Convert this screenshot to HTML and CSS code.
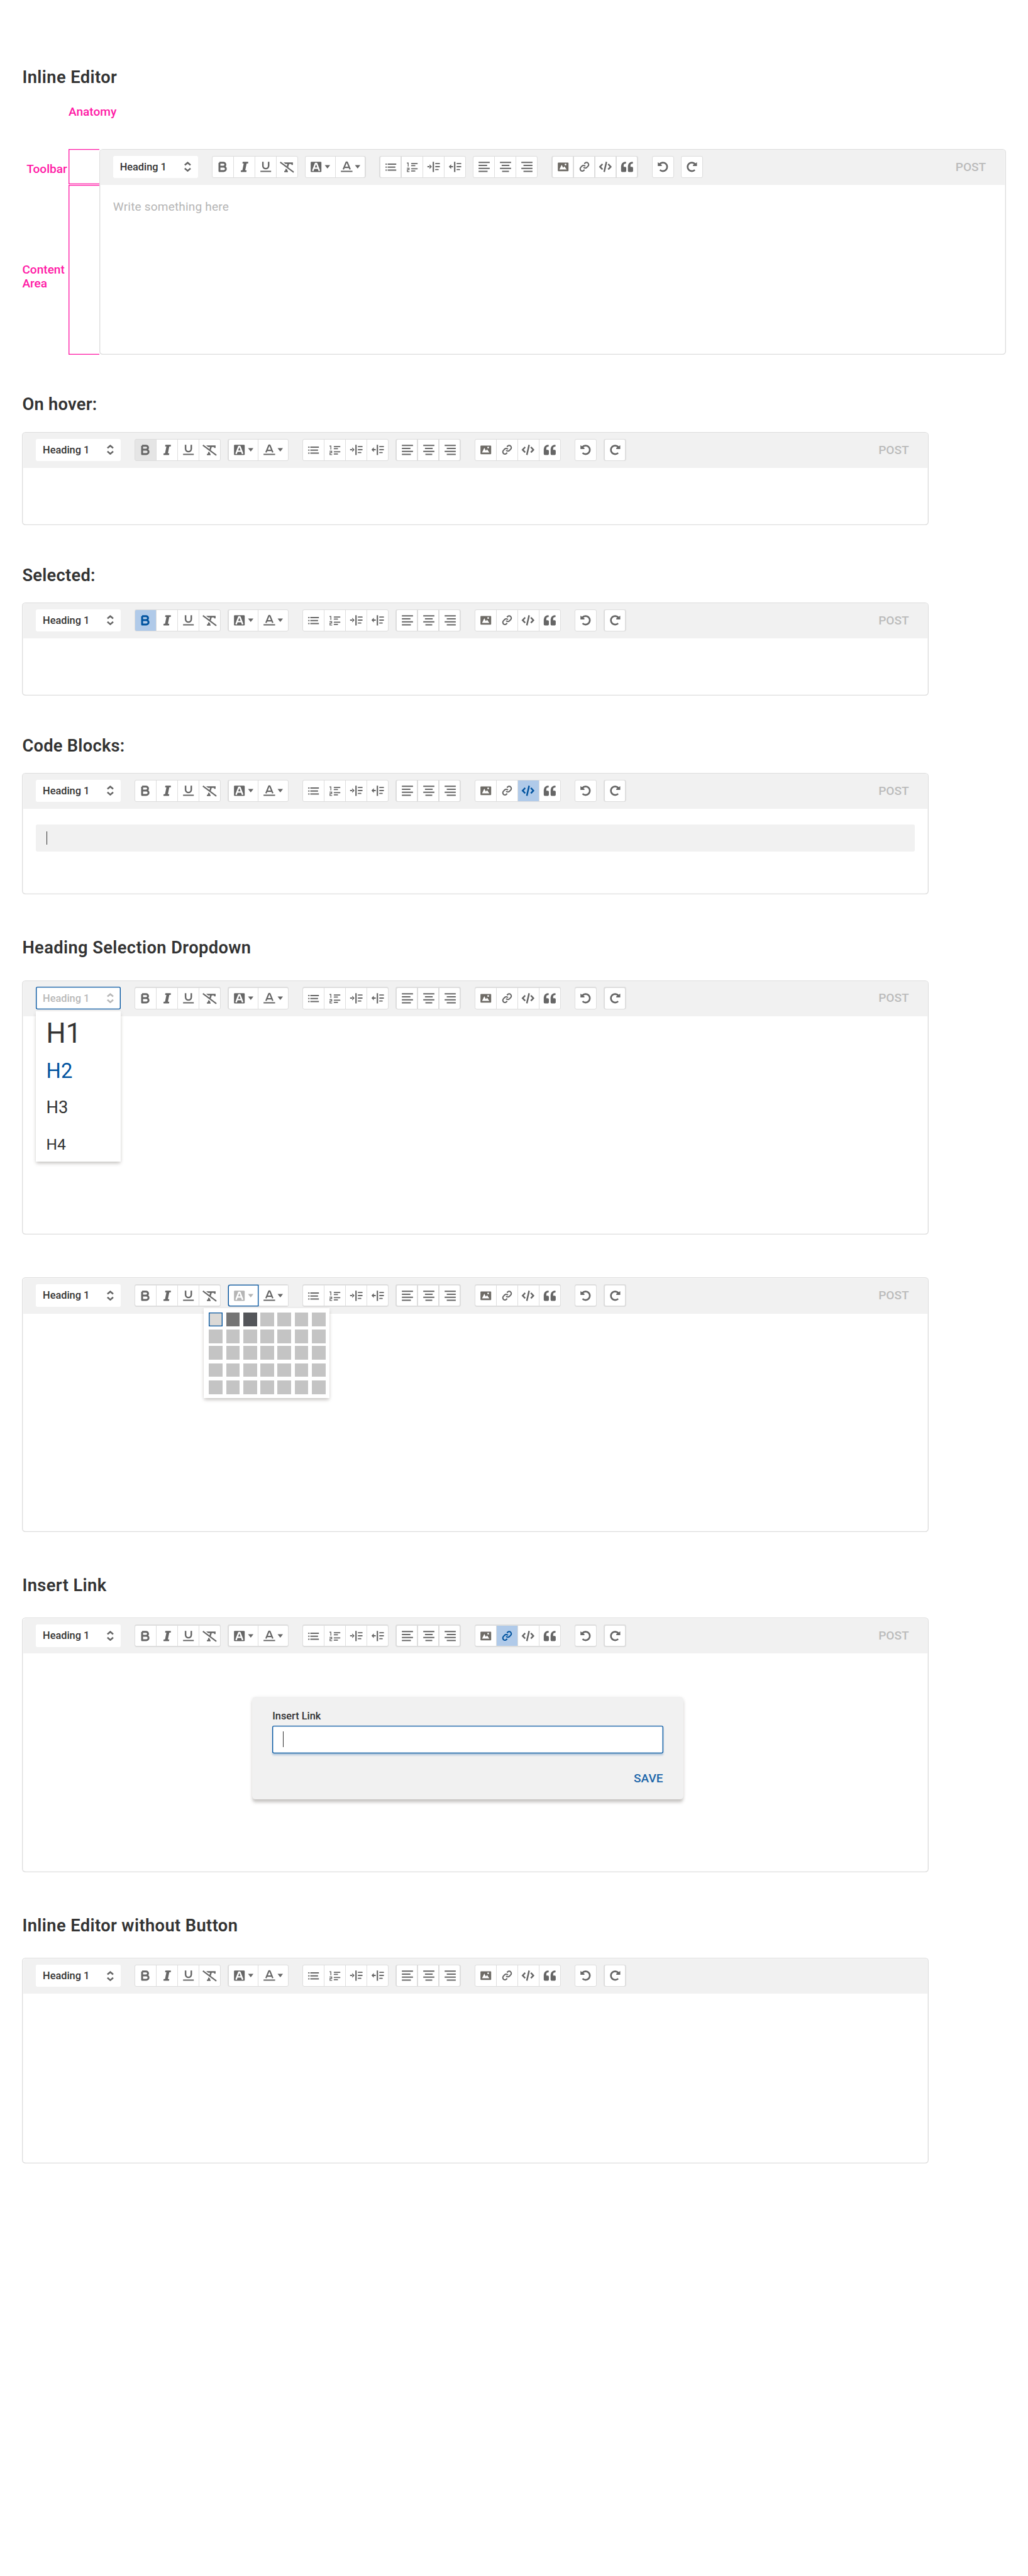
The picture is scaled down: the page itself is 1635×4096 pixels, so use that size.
FILE: index.html
```html
<!DOCTYPE html>
<html lang="en">
<head>
<meta charset="utf-8">
<title>Inline Editor</title>
<link rel="stylesheet" href="styles.css">
</head>
<body>
<svg class="sprite" aria-hidden="true">
  <symbol id="i-updown" viewBox="0 0 16 24"><path class="s" stroke-width="3.800" d="M1.300 8.200 8 2.500 14.700 8.200M1.300 15.800 8 21.500 14.700 15.800"/></symbol>
  <symbol id="i-bold" viewBox="0 0 48 48"><path class="s" stroke-width="4.400" stroke-linejoin="round" d="M16.200 14.200H25.400a4.650 4.650 0 0 1 0 9.300H16.200M25.400 23.500H26a5.150 5.150 0 0 1 0 10.300H16.200V14.200"/></symbol>
  <symbol id="i-italic" viewBox="0 0 48 48"><path d="M21.900 12h10.700a1 1 0 0 1 1 1.200l-.4 2.100a1 1 0 0 1-1 .8h-2.500l-3.200 15.800h2.100a1 1 0 0 1 1 1.200l-.4 2.100a1 1 0 0 1-1 .8H17a1 1 0 0 1-1-1.200l.4-2.100a1 1 0 0 1 1-.8h2.400L23 16.100h-2a1 1 0 0 1-1-1.200l.4-2.100a1 1 0 0 1 1-.8z"/></symbol>
  <symbol id="i-underline" viewBox="0 0 48 48"><path class="s" stroke-width="3.600" d="M17.800 12v9.400a6.700 6.700 0 0 0 13.400 0V12"/><path d="M12 33h25v3H12z"/></symbol>
  <symbol id="i-clear" viewBox="0 0 48 48"><path d="M16 13.600h22v6h-3.400l-.3-2.500h-5.200l-2.300 8-3.300-2.500 1.800-5.500h-4.800z"/><path d="m21.400 28 4 3.200-.7 2.200h1.600v3h-8.600v-3h1.900z"/><path class="s" stroke-width="3" d="m8.400 13 31.400 23.600"/></symbol>
  <symbol id="i-fill" viewBox="0 0 68 48"><rect x="12" y="12" width="25" height="24" rx="2"/><path class="k" stroke-width="3.500" stroke-linejoin="bevel" d="m16.700 33.400 6.500-17.200h2.600l6.500 17.200M18.500 27h12"/><path d="M44.800 19.800h12.600L51.100 27.800z"/></symbol>
  <symbol id="i-color" viewBox="0 0 68 48"><path class="s" stroke-width="3.300" stroke-linejoin="bevel" d="m17.600 30 6.900-17h2.200l6.900 17M19.600 25h12"/><path d="M12 33h27v3H12zM44.800 19.800h12.600L51.100 27.800z"/></symbol>
  <symbol id="i-bullets" viewBox="0 0 48 48"><path d="M12 16h3v3h-3zM17 16h20v3H17zM12 23h3v3h-3zM17 23h18v3H17zM12 30h3v3h-3zM17 30h20v3H17z"/></symbol>
  <symbol id="i-numbers" viewBox="0 0 48 48"><path class="s" stroke-width="2" d="M12 15h3v8M12 27.200h5v3.400h-4V35h5"/><path class="s" stroke-width="2.600" stroke-linecap="round" d="M23 16.200h13M23 21.200h7.500M23 28.300h13M23 33.600h7.500"/></symbol>
  <symbol id="i-indent" viewBox="0 0 48 48"><path d="M15 18v11l5.500-5.500zM10 22.200h6v2.600h-6zM22.200 12h3.200v24h-3.200z"/><path class="s" stroke-width="2.600" stroke-linecap="round" d="M29.300 16.500H38M29.300 23.500H38M29.300 30.300h5.800"/></symbol>
  <symbol id="i-outdent" viewBox="0 0 48 48"><path d="M15.500 18v11L10 23.500zM14 22.200h6v2.600h-6zM22.200 12h3.200v24h-3.200z"/><path class="s" stroke-width="2.600" stroke-linecap="round" d="M29.300 16.500H38M29.300 23.500H38M29.300 30.300h5.800"/></symbol>
  <symbol id="i-left" viewBox="0 0 48 48"><path d="M12 12h26v3H12zM12 19h20v3H12zM12 26h26v3H12zM12 33h21v3H12z"/></symbol>
  <symbol id="i-center" viewBox="0 0 48 48"><path d="M12 12h26v3H12zM16 19h18v3H16zM12 26h26v3H12zM17 33h16v3H17z"/></symbol>
  <symbol id="i-right" viewBox="0 0 48 48"><path d="M12 12h26v3H12zM17 19h21v3H17zM12 26h26v3H12zM17 33h21v3H17z"/></symbol>
  <symbol id="i-image" viewBox="0 0 48 48"><path fill="#6e6b66" fill-rule="evenodd" d="M13.500 14h22a1.500 1.500 0 0 1 1.500 1.500v17a1.500 1.500 0 0 1-1.500 1.500h-22a1.500 1.500 0 0 1-1.500-1.500v-17a1.500 1.500 0 0 1 1.500-1.500zM15.700 30h17l-5.200-7.200-3 3.400-3.500-7zM30 16.700a2 2 0 1 0 0 4 2 2 0 0 0 0-4z"/></symbol>
  <symbol id="i-link" viewBox="0 0 48 48"><g class="s" stroke-width="3" transform="translate(12.200 11.700)"><path d="M10 13a5 5 0 0 0 7.540.540l3-3a5 5 0 0 0-7.070-7.070l-1.720 1.710"/><path d="M14 11a5 5 0 0 0-7.540-.540l-3 3a5 5 0 0 0 7.070 7.070l1.710-1.710"/></g></symbol>
  <symbol id="i-code" viewBox="0 0 48 48"><path class="s" stroke-width="3.600" d="m16.600 17.400-6 6.300 6 6.300M29.800 17.400l6 6.300-6 6.300M25.800 12.300l-5.400 23.500"/></symbol>
  <symbol id="i-quote" viewBox="0 0 48 48"><path id="q" d="M19.500 24H16v-3.600a4 4 0 0 1 4-4h.6a1 1 0 0 0 1-1V13a1 1 0 0 0-1-1H20A10 10 0 0 0 10 22v11.500A2.500 2.500 0 0 0 12.500 36h7a2.500 2.500 0 0 0 2.500-2.500v-7A2.500 2.500 0 0 0 19.500 24z"/><use href="#q" x="16"/></symbol>
  <symbol id="i-undo" viewBox="0 0 48 48"><path class="s" stroke-width="4" d="M16.500 17.600A9.900 9.900 0 1 1 17 31"/><path d="m12 13.200 9.300 6.400V22h-8.500a.8.8 0 0 1-.8-.8z"/></symbol>
  <symbol id="i-redo" viewBox="0 0 48 48"><g transform="translate(48 0) scale(-1 1)"><path class="s" stroke-width="4" d="M16.500 17.600A9.900 9.900 0 1 1 17 31"/><path d="m12 13.200 9.300 6.400V22h-8.500a.8.8 0 0 1-.8-.8z"/></g></symbol>
</svg>

<main class="page">
  <h1 class="title first">Inline Editor</h1>
  <p class="note anatomy-label">Anatomy</p>
  <section class="anatomy">
    <div class="note label-toolbar">Toolbar</div>
    <div class="bracket"></div>
    <div class="note label-content">Content Area</div>
    <div class="bracket"></div>
    <article class="editor h480" data-post="POST"><p class="placeholder">Write something here</p></article>
  </section>

  <h2 class="title">On hover:</h2>
  <article class="editor h218" data-post="POST" data-hover="bold"></article>

  <h2 class="title">Selected:</h2>
  <article class="editor h218" data-post="POST" data-selected="bold"></article>

  <h2 class="title">Code Blocks:</h2>
  <article class="editor h284" data-post="POST" data-selected="code">
    <div class="code-block"><span class="caret"></span></div>
  </article>

  <h2 class="title wide">Heading Selection Dropdown</h2>
  <article class="editor h594" data-post="POST" data-open="heading"></article>
  <article class="editor h594 stacked" data-post="POST" data-open="fill"></article>

  <h2 class="title wide">Insert Link</h2>
  <article class="editor h594" data-post="POST" data-selected="link">
    <form class="dialog">
      <div class="dialog-label">Insert Link</div>
      <div class="dialog-input"><span class="caret"></span></div>
      <div class="dialog-save">SAVE</div>
    </form>
  </article>

  <h2 class="title wide">Inline Editor without Button</h2>
  <article class="editor h480"></article>
</main>
<script src="toolbar.js"></script>
</body>
</html>
```
FILE: toolbar.js
```js
// Builds the shared toolbar at the top of every editor.
const groups = [
  { items: ["bold", "italic", "underline", "clear"], cls: "far" },
  { items: ["fill", "color"], cls: "" },
  { items: ["bullets", "numbers", "indent", "outdent"], cls: "far" },
  { items: ["left", "center", "right"], cls: "" },
  { items: ["image", "link", "code", "quote"], cls: "far" },
  { items: ["undo"], cls: "far" },
  { items: ["redo"], cls: "" }
];

const icon = (name, cls) => `<svg class="${cls}"><use href="#i-${name}"/></svg>`;

const headingMenu = `<div class="menu">
  <div class="option o1">H1</div><div class="option o2">H2</div>
  <div class="option o3">H3</div><div class="option o4">H4</div></div>`;

const shades = ["light current", "mid", "dark"];
const picker = `<div class="picker">${Array.from({ length: 35 }, (_, i) =>
  `<i class="swatch ${shades[i] || ""}"></i>`).join("")}</div>`;

document.querySelectorAll(".editor").forEach(editor => {
  const { post, hover, selected, open } = editor.dataset;
  const button = name => {
    const state = name === hover ? "hover" : name === selected ? "selected" : name === open ? "open" : "";
    const wide = name === "fill" || name === "color" ? "double" : "";
    return `<div class="tool ${wide} ${state}">${icon(name, "glyph")}</div>`;
  };
  const html = groups.map(g =>
    `<div class="group ${g.cls}">${g.items.map(button).join("")}${g.items.includes(open) ? picker : ""}</div>`).join("");
  editor.insertAdjacentHTML("afterbegin", `<header class="toolbar">
    <div class="select ${open === "heading" ? "open" : ""}"><span>Heading 1</span>${icon("updown", "updown")}${open === "heading" ? headingMenu : ""}</div>
    ${html}${post ? `<div class="post">${post}</div>` : ""}</header>`);
});
```
FILE: styles.css
```css
* { box-sizing: border-box; }

body {
  margin: 0;
  background: #fff;
  color: #333;
  font-family: Roboto, "Liberation Sans", sans-serif;
}

p, h1, h2 { margin: 0; }

.sprite { position: absolute; width: 0; height: 0; }
.s { fill: none; stroke: currentColor; }
.k { fill: none; stroke: #fff; }

.page {
  zoom: 0.68125;
  width: 2400px;
  height: 6012px;
  padding: 157px 0 0 52px;
}

.title {
  margin: 93px 0 39px;
  font-size: 40px;
  line-height: 48px;
  font-weight: 600;
  letter-spacing: .4px;
}
.title.wide { margin: 101px 0 51px; letter-spacing: .6px; }
.title.first { margin: 0; letter-spacing: .6px; }

.note {
  color: #ff18a5;
  font-size: 28px;
  line-height: 32px;
  font-weight: 500;
}
.anatomy-label { margin: 40px 0 71px 108px; }

.anatomy {
  display: grid;
  grid-template-columns: 108px 72px 2116px;
  grid-template-rows: 82px 396px;
  row-gap: 2px;
}
.anatomy .editor { grid-column: 3; grid-row: 1 / 3; }
.bracket {
  grid-column: 2;
  box-shadow: inset 2px 0 #ff18a5, inset 0 2px #ff18a5, inset 0 -2px #ff18a5;
}
.label-toolbar { padding: 30px 0 0 10px; }
.label-content { align-self: start; padding-top: 182px; width: 106px; }

.editor {
  width: 2116px;
  padding: 2px;
  box-shadow: inset 0 0 0 2px #ddd;
  border-radius: 8px;
  background: #fff;
}
.h218 { height: 218px; }
.h284 { height: 284px; }
.h480 { height: 480px; }
.h594 { height: 594px; }
.stacked { margin-top: 100px; }

.toolbar {
  display: flex;
  height: 82px;
  padding: 14px 44px 0 30px;
  background: #f1f1f1;
  border-radius: 6px 6px 0 0;
}

.select {
  position: relative;
  display: flex;
  justify-content: space-between;
  align-items: center;
  width: 198px;
  height: 52px;
  padding: 0 16px;
  border-radius: 4px;
  background: #fff;
  font-size: 24px;
  font-weight: 500;
}
.updown { width: 16px; height: 24px; color: #666; fill: currentColor; }
.select.open { color: #b8b8b8; box-shadow: inset 0 0 0 2px #00539f; }
.select.open .updown { color: #b8b8b8; }

.group {
  position: relative;
  display: flex;
  gap: 2px;
  height: 52px;
  margin-left: 16px;
  padding: 2px;
  border-radius: 5px;
  background: #ddd;
}
.group.far { margin-left: 32px; }

.tool { width: 48px; height: 48px; background: #fff; color: #666; }
.tool.double { width: 68px; }
.tool:first-child { border-radius: 3px 0 0 3px; }
.tool:nth-last-child(1) { border-radius: 0 3px 3px 0; }
.tool:only-child { border-radius: 3px; }
.tool.hover { background: #e5e5e5; }
.tool.selected { background: #b0cae9; color: #00539f; }
.tool.open { position: relative; color: #b5b5b5; box-shadow: 0 0 0 2px #00539f; }
.glyph { display: block; width: 100%; height: 100%; fill: currentColor; }

.post {
  margin-left: auto;
  line-height: 52px;
  font-size: 28px;
  font-weight: 500;
  color: #bbb;
}

.placeholder {
  padding: 33px 30px;
  font-size: 28px;
  line-height: 36px;
  letter-spacing: .25px;
  color: #b5b5b5;
}

.code-block {
  display: flex;
  align-items: center;
  height: 64px;
  margin: 36px 30px 0;
  padding-left: 24px;
  border-radius: 4px;
  background: #f1f1f1;
}
.caret { width: 1.500px; height: 32px; background: #333; }

.menu, .picker, .dialog {
  box-shadow: 0 8px 8px -2px rgba(90, 84, 74, .28), 0 2px 8px rgba(90, 84, 74, .12);
}

.menu {
  position: absolute;
  z-index: 2;
  top: 56px;
  left: 0;
  width: 198px;
  height: 352px;
  padding: 11px 0 0 24px;
  background: #fff;
  color: #333;
  font-weight: 400;
}
.option { height: 86px; line-height: 86px; }
.o1 { font-size: 64px; }
.o2 { font-size: 48px; color: #00539f; }
.o3 { font-size: 40px; }
.o4 { font-size: 36px; height: 80px; }

.picker {
  position: absolute;
  z-index: 2;
  top: 56px;
  left: -56px;
  display: grid;
  grid-template-columns: repeat(7, 32px);
  grid-template-rows: 40px 38px 40px 40px 32px;
  column-gap: 8px;
  width: 294px;
  height: 210px;
  padding: 10px 12px;
  background: #fff;
}
.swatch { height: 32px; background: #c4c4c4; }
.swatch.light { background: #dbd9d6; }
.swatch.mid { background: #757575; }
.swatch.dark { background: #54565a; }
.swatch.current { box-shadow: inset 0 0 0 2px #00539f; }

.dialog {
  width: 1008px;
  height: 240px;
  margin: 100px 0 0 534px;
  padding: 32px 48px 0;
  border-radius: 8px;
  background: #f1f1f1;
}
.dialog-label { font-size: 24px; line-height: 28px; font-weight: 500; }
.dialog-input {
  display: flex;
  align-items: center;
  height: 64px;
  margin-top: 8px;
  padding-left: 24px;
  border-radius: 4px;
  background: #fff;
  box-shadow: inset 0 0 0 2px #00539f, 0 4px 4px rgba(0, 83, 159, .25);
}
.dialog-input .caret { height: 36px; }
.dialog-save {
  margin-top: 44px;
  text-align: right;
  font-size: 28px;
  line-height: 32px;
  font-weight: 500;
  color: #1c66aa;
}
```
